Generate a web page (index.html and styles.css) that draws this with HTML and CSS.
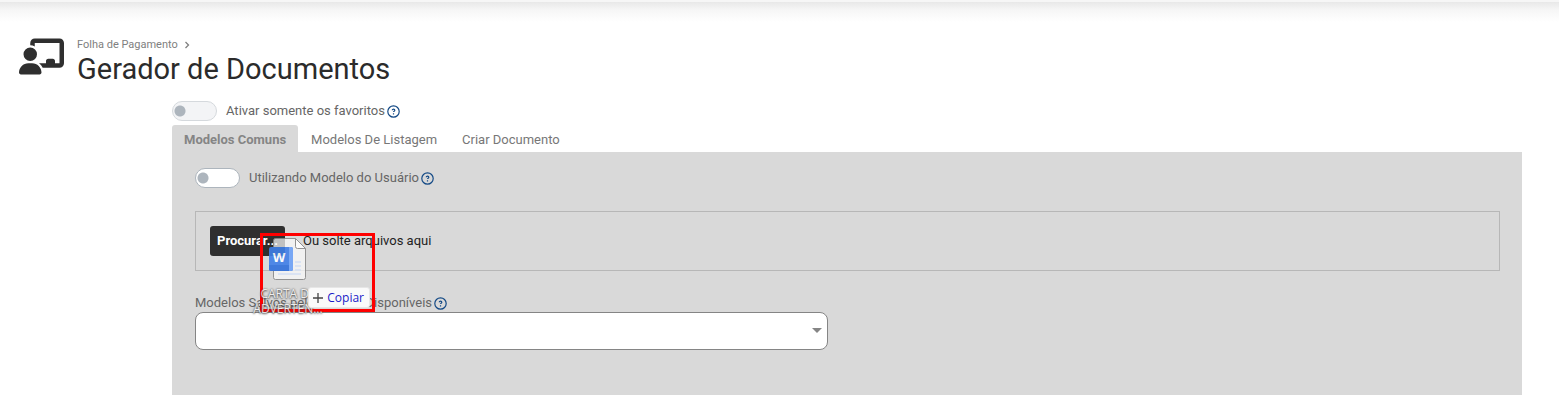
FILE: index.html
```html
<!DOCTYPE html>
<html lang="pt-BR">
    <head>
        <meta charset="utf-8" />
        <title>Gerador de Documentos</title>
        <meta name="viewport" content="width=device-width, initial-scale=1" />
        <link rel="stylesheet" href="styles.css">
    </head>

    <body>
        <div class="topbar"></div>

        <header class="page-head">
            <svg class="page-icon" viewBox="0 0 640 512" aria-hidden="true"><path d="M160 64c0-35.300 28.700-64 64-64H576c35.300 0 64 28.700 64 64V352c0 35.300-28.700 64-64 64H336.800c-11.800-25.500-29.900-47.500-52.400-64H384V320c0-17.700 14.300-32 32-32h64c17.700 0 32 14.300 32 32v32h64V64L224 64v49.100C205.200 102.200 183.300 96 160 96V64zm0 64a96 96 0 1 1 0 192 96 96 0 1 1 0-192zM133.300 352h53.300C260.300 352 320 411.700 320 485.300c0 14.700-11.900 26.700-26.700 26.700H26.700C11.900 512 0 500.100 0 485.300C0 411.700 59.700 352 133.300 352z"/></svg>
            <div>
                <nav class="crumb">
                    <a href="#">Folha de Pagamento</a>
                    <svg viewBox="0 0 6 8" aria-hidden="true"><path d="M1.500 1l3 3-3 3"/></svg>
                </nav>
                <h1>Gerador de Documentos</h1>
            </div>
        </header>

        <main class="content">
            <div class="switch-row">
                <input class="switch is-muted" type="checkbox" id="favoritos" />
                <label for="favoritos">Ativar somente os favoritos</label>
                <svg class="help" viewBox="0 0 13 13" aria-hidden="true"><circle cx="6.500" cy="6.500" r="5.700"/><path d="M5.300 5.300c0-1.600 2.500-1.500 2.500 0 0 .9-1.300.9-1.300 1.800M6.500 8.300v1.100"/></svg>
            </div>

            <nav class="tabs">
                <a class="tab curr" href="#comuns">Modelos Comuns</a>
                <a class="tab" href="#listagem">Modelos De Listagem</a>
                <a class="tab" href="#criar">Criar Documento</a>
            </nav>

            <section class="panel" id="comuns">
                <div class="switch-row">
                    <input class="switch" type="checkbox" id="modelo-usuario" />
                    <label for="modelo-usuario">Utilizando Modelo do Usuário</label>
                    <svg class="help" viewBox="0 0 13 13" aria-hidden="true"><circle cx="6.500" cy="6.500" r="5.700"/><path d="M5.300 5.300c0-1.600 2.500-1.500 2.500 0 0 .9-1.300.9-1.300 1.800M6.500 8.300v1.100"/></svg>
                </div>

                <div class="dropzone">
                    <button class="browse" type="button">Procurar...</button>
                    <span>Ou solte arquivos aqui</span>
                </div>

                <div class="field">
                    <div class="field-label">
                        <label for="modelos">Modelos Salvos pelo Usuário Disponíveis</label>
                        <svg class="help" viewBox="0 0 13 13" aria-hidden="true"><circle cx="6.500" cy="6.500" r="5.700"/><path d="M5.300 5.300c0-1.600 2.500-1.500 2.500 0 0 .9-1.300.9-1.300 1.800M6.500 8.300v1.100"/></svg>
                    </div>
                    <div class="select-wrap">
                        <select id="modelos"><option></option></select>
                    </div>
                </div>

                <!-- arquivo sendo arrastado -->
                <div class="drag">
                    <svg class="drag-file" viewBox="0 0 40 44" aria-hidden="true">
                        <path d="M7.500 1.500h20l10 10v29a2 2 0 0 1-2 2h-28a2 2 0 0 1-2-2v-37a2 2 0 0 1 2-2z" fill="#fafafa" fill-opacity=".8" stroke="#8a8a8a"/>
                        <path d="M27.500 1.500v8a2 2 0 0 0 2 2h8z" fill="#fff" stroke="#8a8a8a" stroke-linejoin="round"/>
                        <path d="M27 25h6M27 29h6M27 33h6M10 37h23" stroke="#dbe5f6" stroke-width="2"/>
                        <rect x="1" y="10" width="24" height="24" rx="2" fill="#3f7fe8"/>
                        <path d="M21 10h2a2 2 0 0 1 2 2v20a2 2 0 0 1-2 2h-2z" fill="#6ea2f8"/>
                        <path d="M1 28h20v6H3a2 2 0 0 1-2-2z" fill="#2f6fdc"/>
                        <text class="drag-letter" x="11" y="25" text-anchor="middle">W</text>
                    </svg>
                    <span class="drag-name">CARTA DE ADVERTEN...</span>
                    <span class="drag-tip">
                        <svg viewBox="0 0 10 10" aria-hidden="true"><path d="M5 0v10M0 5h10"/></svg>
                        Copiar
                    </span>
                </div>
            </section>
        </main>
    </body>
</html>
```
FILE: styles.css
```css
*{box-sizing:border-box;}
body{margin:0;background:#fff;color:#666;font:13px/16px Roboto,"Liberation Sans",sans-serif;}
a{color:inherit;text-decoration:none;}

.topbar{height:22px;border-top:2px solid #f6f6f6;background:linear-gradient(#e8e8e8,#f6f6f6 40%,#fff);}

.page-head{display:flex;gap:13px;padding:16px 19px 0;}
.page-icon{width:45px;height:37px;fill:#2f2f2f;}
.crumb{display:flex;align-items:center;gap:6px;height:14px;font-size:11px;color:#808080;}
.crumb svg{width:6px;height:8px;fill:none;stroke:#808080;stroke-width:1.3;}
h1{margin:0;color:#2b2b2b;font-size:29px;line-height:34px;font-weight:400;}

.content{padding:15px 37px 8px 172px;}
.switch-row{display:flex;align-items:center;height:20px;}
.switch-row label{margin:0 2px 0 9px;}
.switch{appearance:none;width:45px;height:20px;margin:0;border:1px solid #adb5bd;border-radius:10px;background:#fff radial-gradient(circle at 7px 9px,#adb5bd 5px,transparent 6px);}
.switch.is-muted{border-color:#d5d9dd;background-color:#f3f4f6;}
.help{width:13px;height:13px;fill:none;stroke:#144a86;stroke-width:1.2;}

.tabs{display:flex;gap:1px;margin-top:4px;}
.tab{height:27px;padding:0 12px;line-height:30px;color:#777;border-radius:3px 3px 0 0;}
.tab.curr{background:#d9d9d9;color:#858585;font-weight:700;}

.panel{position:relative;padding:16px 22px 45px 23px;background:#d9d9d9;}
.dropzone{display:flex;align-items:center;gap:18px;height:60px;margin-top:23px;padding:0 14px;border:1px solid #b7b7b7;color:#222;}
.browse{width:75px;height:30px;padding:0;border:0;border-radius:3px;background:#2f2f2f;color:#fff;font:700 13px/16px Roboto,sans-serif;}

.field{width:48.5%;margin-top:23px;}
.field-label{display:flex;align-items:center;gap:2px;height:18px;}
.select-wrap{position:relative;}
.select-wrap select{appearance:none;display:block;width:100%;height:38px;padding:0 24px 0 8px;border:1px solid #858585;border-radius:8px;background:#fff;}
.select-wrap:after{content:"";position:absolute;right:6px;top:16px;border:5px solid transparent;border-top-color:#858585;border-bottom:0;pointer-events:none;}

.drag{position:absolute;left:88px;top:81px;width:115px;height:79px;border:3px solid #f00;pointer-events:none;}
.drag-file{position:absolute;left:5px;top:1px;width:40px;height:44px;opacity:.9;}
.drag-letter{fill:#fff;font:700 13px "Open Sans",sans-serif;}
.drag-name{position:absolute;left:-10px;top:50px;width:70px;color:#f2f2f2;font:12px/15px "Open Sans",sans-serif;text-align:center;text-shadow:0 0 2px #333,0 1px 2px #444;opacity:.85;}
.drag-tip{position:absolute;right:2px;top:51px;display:flex;align-items:center;gap:4px;height:21px;padding:0 5px 0 4px;border:1px solid #e6e6e6;border-radius:3px;background:#fafafa;color:#1a1ac8;font:12px/19px "Open Sans",sans-serif;}
.drag-tip svg{width:10px;height:10px;stroke:#444;stroke-width:1.3;}
```
